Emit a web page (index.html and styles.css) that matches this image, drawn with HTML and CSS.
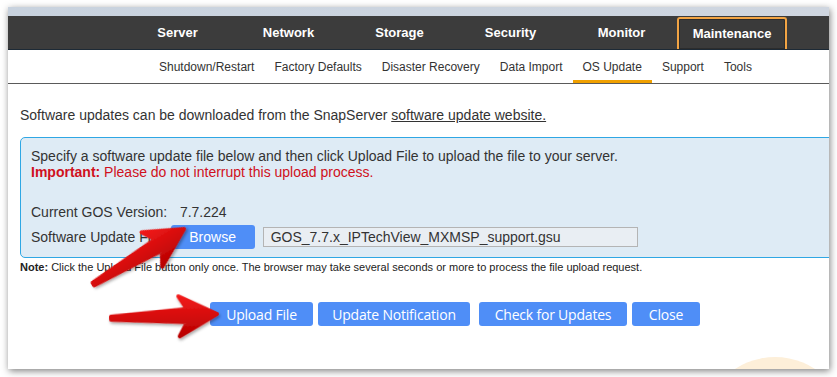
FILE: index.html
```html
<!DOCTYPE html>
<html lang="en">
<head>
    <meta charset="UTF-8">
    <title>OS Update</title>
    <link rel="stylesheet" href="styles.css">
</head>
<body>
    <div class="window">
        <div class="title-strip"></div>

        <nav class="main-nav">
            <a class="nav-item">Server</a>
            <a class="nav-item">Network</a>
            <a class="nav-item">Storage</a>
            <a class="nav-item">Security</a>
            <a class="nav-item">Monitor</a>
            <a class="nav-item active">Maintenance</a>
        </nav>

        <nav class="sub-nav">
            <a class="sub-item">Shutdown/Restart</a>
            <a class="sub-item">Factory Defaults</a>
            <a class="sub-item">Disaster Recovery</a>
            <a class="sub-item">Data Import</a>
            <a class="sub-item active">OS Update</a>
            <a class="sub-item">Support</a>
            <a class="sub-item">Tools</a>
        </nav>

        <div class="content">
            <p class="intro">Software updates can be downloaded from the SnapServer <a class="link">software update website.</a></p>

            <div class="upload-box">
                <p>Specify a software update file below and then click Upload File to upload the file to your server.</p>
                <p class="important"><b>Important:</b> Please do not interrupt this upload process.</p>

                <div class="version-row">
                    <span class="label">Current GOS Version:</span>
                    <span>7.7.224</span>
                </div>
                <div class="file-row">
                    <span>Software Update File:</span>
                    <button class="browse">Browse</button>
                    <div class="file-name">GOS_7.7.x_IPTechView_MXMSP_support.gsu</div>
                </div>
            </div>

            <p class="note"><b>Note:</b> Click the Upload File button only once. The browser may take several seconds or more to process the file upload request.</p>

            <div class="actions">
                <button class="btn btn-upload">Upload File</button>
                <button class="btn btn-notify">Update Notification</button>
                <button class="btn btn-check">Check for Updates</button>
                <button class="btn btn-close">Close</button>
            </div>
        </div>

        <div class="blob"></div>
    </div>

    <!-- callout arrows drawn over the screenshot -->
    <svg class="arrows" width="837" height="377" viewBox="0 0 837 377">
        <defs>
            <linearGradient id="red" x1="0" y1="0" x2="0" y2="1">
                <stop offset="0" stop-color="#f21a1a"/>
                <stop offset="1" stop-color="#b80000"/>
            </linearGradient>
            <filter id="drop" x="-20%" y="-40%" width="140%" height="180%">
                <feDropShadow dx="1" dy="2" stdDeviation="1.5" flood-color="#000" flood-opacity="0.35"/>
            </filter>
            <polygon id="arrow" points="0,0 -38,-19 -30,-6 -106,-1 -106,2 -30,7 -38,21"/>
        </defs>
        <use href="#arrow" transform="translate(184 229) rotate(-31)" fill="url(#red)" stroke="url(#red)" stroke-width="4" stroke-linejoin="round" filter="url(#drop)"/>
        <use href="#arrow" transform="translate(217 314) rotate(-2)" fill="url(#red)" stroke="url(#red)" stroke-width="4" stroke-linejoin="round" filter="url(#drop)"/>
    </svg>
</body>
</html>
```

FILE: styles.css
```css
* {
    margin: 0;
    padding: 0;
    box-sizing: border-box;
}

body {
    font-family: 'Liberation Sans', Arial, sans-serif;
    background: #fff;
    color: #333;
    width: 837px;
    height: 377px;
    overflow: hidden;
    position: relative;
}

.window {
    position: relative;
    margin: 7px 0 0 8px;
    width: 821px;
    height: 362px;
    background: #fff;
    overflow: hidden;
    box-shadow: 1px 2px 7px rgba(0, 0, 0, 0.5);
}

.title-strip {
    height: 9px;
    background: linear-gradient(90deg, #c8d2de, #cfd6e0);
}

.main-nav {
    display: flex;
    align-items: flex-end;
    height: 34px;
    padding-left: 114px;
    background: #3c3c3c;
    border-bottom: 1px solid #1d2a36;
}

.nav-item {
    width: 111px;
    height: 32px;
    line-height: 32px;
    text-align: center;
    color: #fff;
    font-weight: bold;
    font-size: 13px;
}

.nav-item.active {
    width: 110px;
    border: 2px solid #f2a444;
    border-bottom: none;
    border-radius: 3px 3px 0 0;
    line-height: 30px;
    background: #3a3a3a;
    box-shadow: inset 0 0 0 1px #2c2c2c;
}

.sub-nav {
    display: flex;
    align-items: stretch;
    height: 34px;
    padding-left: 141px;
    border-bottom: 1px solid #5a5a5a;
}

.sub-item {
    padding: 2px 10px 0;
    line-height: 31px;
    font-size: 12px;
    color: #333;
    border-bottom: 3px solid transparent;
}

.sub-item.active {
    border-bottom-color: #f0a000;
}

.content {
    padding: 22px 0 0 12px;
}

.intro {
    font-size: 14px;
    line-height: 18px;
}

.link {
    text-decoration: underline;
    color: #333;
}

.upload-box {
    margin-top: 13px;
    margin-right: -12px;
    padding: 10px 10px 8px 10px;
    background: #deebf5;
    border: 1px solid #2fa7e4;
    border-radius: 5px;
    font-size: 14px;
}

.upload-box p {
    line-height: 16px;
}

.important {
    color: #d01020;
}

.version-row {
    margin-top: 22px;
    line-height: 20px;
}

.label {
    display: inline-block;
    width: 145px;
}

.file-row {
    display: flex;
    align-items: center;
    margin-top: 3px;
}

.browse {
    margin-left: 5px;
    height: 24px;
    width: 84px;
    border: none;
    border-radius: 3px;
    background: #4f8ef7;
    color: #fff;
    font-family: 'Liberation Sans', Arial, sans-serif;
    font-size: 14px;
}

.file-name {
    margin-left: 8px;
    width: 375px;
    height: 20px;
    line-height: 18px;
    padding-left: 7px;
    background: #e9eef3;
    border: 1px solid #b4b4b4;
    font-size: 14px;
}

.note {
    margin-top: 2px;
    font-size: 11px;
    line-height: 14px;
    color: #222;
}

.actions {
    display: flex;
    gap: 5px;
    margin-top: 28px;
    padding-left: 190px;
}

.btn {
    height: 24px;
    padding: 0;
    border: none;
    border-radius: 3px;
    background: #4f8ef7;
    color: #fff;
    font-family: 'Open Sans', sans-serif;
    font-size: 14px;
    letter-spacing: -0.2px;
    text-align: center;
}

.btn-upload { width: 103px; }
.btn-notify { width: 152px; }
.btn-check { width: 148px; margin-left: 4px; }
.btn-close { width: 68px; }

.blob {
    position: absolute;
    left: 694px;
    top: 350px;
    width: 146px;
    height: 146px;
    border-radius: 50%;
    background: #fdefd9;
}

.arrows {
    position: absolute;
    top: 0;
    left: 0;
    pointer-events: none;
}
```
